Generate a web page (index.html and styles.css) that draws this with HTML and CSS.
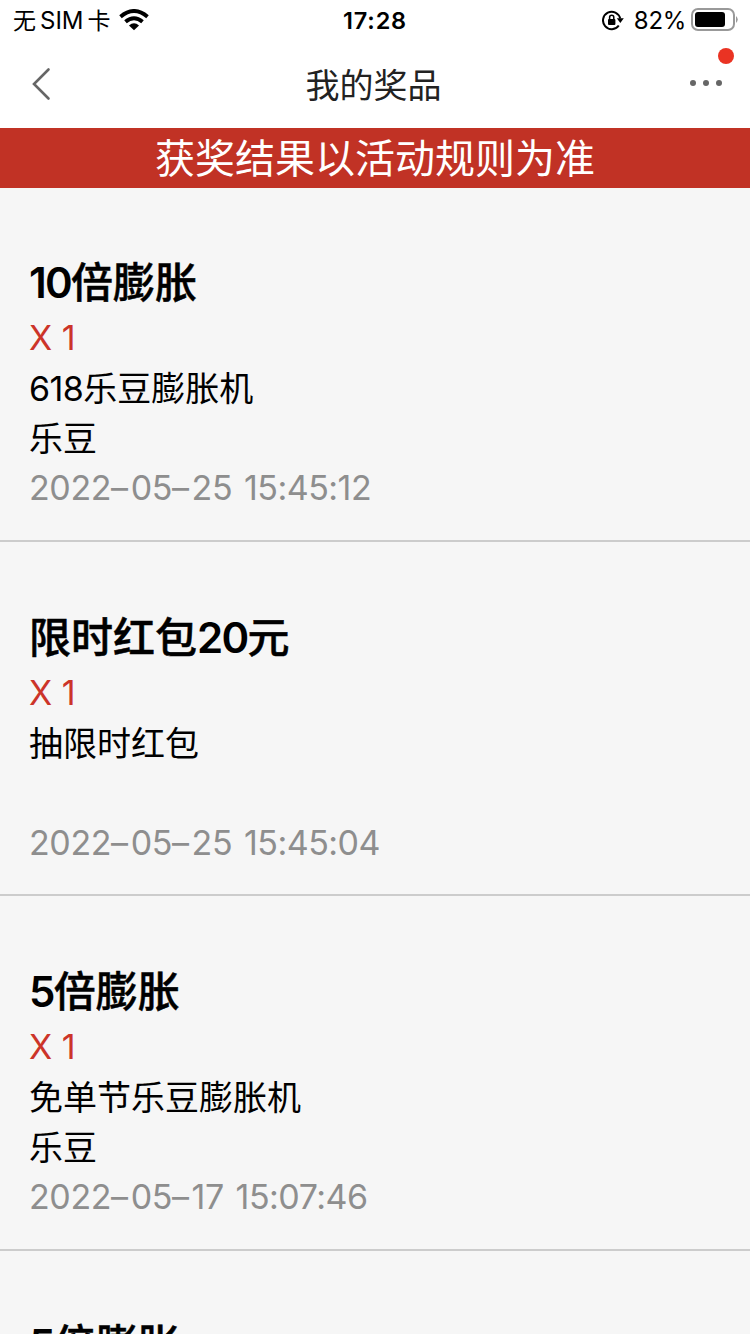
FILE: index.html
```html
<!DOCTYPE html>
<html lang="zh-CN">
<head>
<meta charset="utf-8">
<title>我的奖品</title>
<link rel="stylesheet" href="styles.css">
</head>
<body>
<header class="status">
  <div class="status-left"><span class="carrier">无<span class="sim">SIM</span>卡</span>
    <svg class="wifi" width="30" height="22" viewBox="0 0 30 22"><path d="M1.500 7.700Q15-3.700 28.500 7.700M6.500 12.800Q15 5.500 23.500 12.800" fill="none" stroke="#000" stroke-width="3.900"/><path d="M10 16.400Q15 12.200 20 16.400L15 21.300Z"/></svg>
  </div>
  <div class="clock">17:28</div>
  <div class="status-right">
    <svg class="lock" width="22" height="22" viewBox="0 0 22 22"><path d="M18.200 9.500A8.700 8.700 0 1 0 16.800 16.500" fill="none" stroke="#000" stroke-width="2"/><path d="M14.800 9.200h7L18.300 14Z"/><rect x="6" y="10" width="7.400" height="6" rx="1"/><path d="M7.600 10.800V8.400a2.100 2.100 0 0 1 4.200 0v2.400" fill="none" stroke="#000" stroke-width="1.500"/></svg>
    <span class="percent">82%</span>
    <svg class="battery" width="48" height="24" viewBox="0 0 48 24"><rect x="1" y="1" width="42" height="21" rx="6" fill="none" stroke="#999" stroke-width="2"/><rect x="4" y="4" width="30" height="15" rx="3"/><path d="M45 8q3.500 3.500 0 7Z" fill="#999"/></svg>
  </div>
</header>
<nav class="nav">
  <svg class="back" width="20" height="34" viewBox="0 0 20 34"><path d="M17.500 2.500L3 17L17.500 31.500" fill="none" stroke="#666" stroke-width="2.600" stroke-linecap="round"/></svg>
  <h1 class="title">我的奖品</h1>
  <div class="more"><i class="dot"></i><i class="dot"></i><i class="dot"></i><b class="badge"></b></div>
</nav>
<div class="notice">获奖结果以活动规则为准</div>
<main class="list">
  <article class="prize">
    <h2 class="name"><span class="num">10</span>倍膨胀</h2>
    <p class="count">X 1</p><p class="line"><span class="num">618</span>乐豆膨胀机</p><p class="line">乐豆</p>
    <p class="time">2022<span class="dash">–</span>05<span class="dash">–</span>25 <span class="hms">15:45:12</span></p>
  </article>
  <article class="prize">
    <h2 class="name">限时红包<span class="num">20</span>元</h2>
    <p class="count">X 1</p><p class="line">抽限时红包</p><p class="line"></p>
    <p class="time">2022<span class="dash">–</span>05<span class="dash">–</span>25 <span class="hms">15:45:04</span></p>
  </article>
  <article class="prize">
    <h2 class="name"><span class="num">5</span>倍膨胀</h2>
    <p class="count">X 1</p><p class="line">免单节乐豆膨胀机</p><p class="line">乐豆</p>
    <p class="time">2022<span class="dash">–</span>05<span class="dash">–</span>17 <span class="hms">15:07:46</span></p>
  </article>
  <article class="prize">
    <h2 class="name"><span class="num">5</span>倍膨胀</h2>
  </article>
</main>
</body>
</html>
```
FILE: styles.css
```css
* { box-sizing: border-box; }
html, body { height: 1334px; overflow: hidden; }
body { margin: 0; width: 750px; background: #f6f6f6; color: #000; font-family: Inter, "Noto Sans CJK SC", sans-serif; display: flex; flex-direction: column; }
h1, h2, p { margin: 0; font-weight: 400; }
svg { display: block; flex: none; }
.status { flex: none; height: 40px; background: #fff; display: grid; grid-template-columns: 1fr auto 1fr; align-items: center; padding: 0 11px 0 13px; font-size: 24px; line-height: 38px; }
.status-left, .status-right { display: flex; align-items: center; }
.carrier { white-space: nowrap; width: 97px; font-size: 23px; padding-top: 2px; }
.sim { margin: 0 4px; font-size: 24px; }
.wifi { margin-left: 9px; }
.clock { font-weight: 600; font-size: 23.5px; letter-spacing: 0.8px; padding: 2px 2px 0 0; }
.status-right { justify-content: flex-end; }
.percent { margin: 0 5px 0 10px; letter-spacing: -0.3px; padding-top: 2px; }
.nav { flex: none; height: 88px; background: #fff; display: grid; grid-template-columns: 1fr auto 1fr; align-items: center; padding: 0 28px 0 25px; }
.back { margin-left: 6px; }
.title { font-size: 34px; line-height: 85px; padding-top: 3px; color: #222; }
.more { position: relative; display: flex; justify-content: flex-end; gap: 7px; margin-top: -2px; }
.dot { width: 6px; height: 6px; border-radius: 50%; background: #666; }
.badge { position: absolute; width: 16px; height: 16px; border-radius: 50%; background: #ea3323; right: -12px; top: -32px; }
.notice { flex: none; height: 60px; background: #c13225; color: #fff; text-align: center; font-size: 40px; line-height: 60px; padding-top: 1px; }
.list { flex: 1; min-height: 0; overflow: hidden; }
.prize { height: 354px; border-bottom: 2px solid #ccc; padding: 65px 29px 0; }
.prize:nth-child(2), .prize:nth-child(3) { padding-top: 66px; }
.prize:nth-child(3) { height: 355px; }
.prize:nth-child(4) { padding-top: 64px; }
.name { font-size: 42px; line-height: 60px; font-weight: 500; -webkit-text-stroke: 0.5px #000; }
.name .num { font-weight: 600; letter-spacing: -1.7px; -webkit-text-stroke: 0; }
.count, .line, .time { height: 50px; line-height: 50px; font-size: 34px; white-space: nowrap; }
.count { color: #cc3429; }
.line { padding-top: 1px; }
.line .num { letter-spacing: -0.6px; }
.time { color: #8e8e8e; letter-spacing: -0.4px; }
.dash { margin-right: 3px; }
.hms { letter-spacing: -0.5px; margin-left: 2.5px; }
```
